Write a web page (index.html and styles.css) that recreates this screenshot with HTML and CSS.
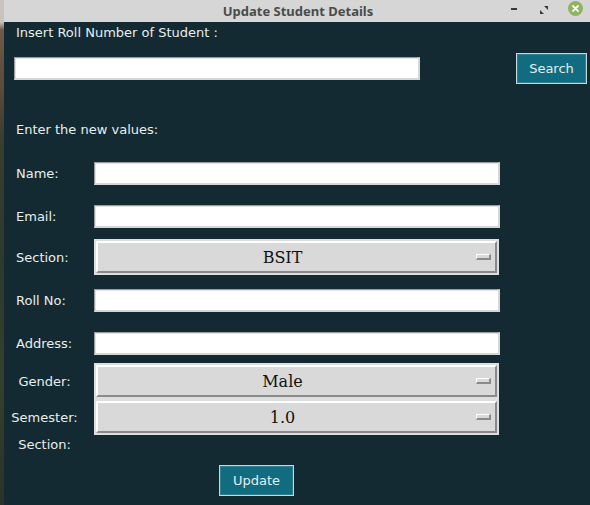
FILE: index.html
```html
<!DOCTYPE html>
<html>
<head>
<meta charset="utf-8">
<title>Update Student Details</title>
<link rel="stylesheet" href="styles.css">
</head>
<body>
<div class="desk"></div>
<div class="window">
  <div class="titlebar">
    <div class="title">Update Student Details</div>
    <div class="controls">
      <span class="ctl-min"></span>
      <svg class="ctl-max" width="8" height="8" viewBox="0 0 8 8"><path d="M4 0H8V4Z" fill="#3a3a3a"/><path d="M0 4V8H4Z" fill="#3a3a3a"/></svg>
      <svg class="ctl-close" width="15" height="15" viewBox="0 0 15 15"><circle cx="7.5" cy="7.5" r="7.5" fill="#8cb65a"/><path d="M5 5L10 10M10 5L5 10" stroke="#ffffff" stroke-width="1.8" stroke-linecap="round"/></svg>
    </div>
  </div>
  <div class="content">
    <div class="txt top-label">Insert Roll Number of Student :</div>
    <div class="search-row">
      <div class="entry wide"></div>
      <div class="btn search">Search</div>
    </div>
    <div class="txt heading">Enter the new values:</div>
    <div class="form">
      <div class="row r-entry"><div class="lbl txt">Name:</div><div class="entry"></div></div>
      <div class="row r-entry g20"><div class="lbl txt">Email:</div><div class="entry"></div></div>
      <div class="row r-opt g11"><div class="lbl txt">Section:</div><div class="opt"><span class="opt-text">BSIT</span><span class="ind"></span></div></div>
      <div class="row r-entry g14"><div class="lbl txt">Roll No:</div><div class="entry"></div></div>
      <div class="row r-entry g20"><div class="lbl txt">Address:</div><div class="entry"></div></div>
      <div class="row r-opt g8"><div class="lbl c txt">Gender:</div><div class="opt"><span class="opt-text">Male</span><span class="ind"></span></div></div>
      <div class="row r-opt"><div class="lbl c txt">Semester:</div><div class="opt"><span class="opt-text">1.0</span><span class="ind"></span></div></div>
      <div class="row r-last"><div class="lbl c txt">Section:</div></div>
    </div>
    <div class="btn update">Update</div>
  </div>
</div>
</body>
</html>
```
FILE: styles.css
```css
html, body {
  margin: 0;
  padding: 0;
}
body {
  width: 590px;
  height: 505px;
  overflow: hidden;
  display: flex;
  background: #132a32;
}
.desk {
  width: 4px;
  flex: none;
  background: linear-gradient(to bottom, #c9c3bd 0px, #c9c3bd 22px, #6e5a47 30px, #5a4a3a 90px, #3a3d30 140px, #2c3a2c 260px, #34402f 380px, #2a3327 505px);
}
.window {
  flex: 1;
  display: flex;
  flex-direction: column;
  background: #132a32;
}
.titlebar {
  height: 22px;
  flex: none;
  background: #d6d6d6;
  position: relative;
  display: flex;
  align-items: center;
  justify-content: center;
}
.title {
  font-family: "Noto Sans", "DejaVu Sans", sans-serif;
  font-weight: bold;
  font-size: 13px;
  color: #4b4b4b;
  margin-left: 2px;
}
.controls {
  position: absolute;
  right: 7px;
  top: 1px;
  height: 15px;
  display: flex;
  align-items: center;
}
.ctl-min {
  width: 6px;
  height: 2px;
  background: #3a3a3a;
  margin-right: 23px;
}
.ctl-max {
  margin-right: 20px;
  margin-top: 2px;
}
.content {
  flex: 1;
  display: flex;
  flex-direction: column;
}
.txt {
  font-family: "DejaVu Sans", sans-serif;
  font-size: 13px;
  line-height: 15px;
  color: #e9eded;
}
.top-label {
  margin: 3px 0 0 12px;
}
.search-row {
  margin-top: 13px;
  height: 31px;
  display: flex;
  align-items: center;
}
.entry {
  box-sizing: border-box;
  width: 406px;
  height: 23px;
  background: #ffffff;
  border-style: solid;
  border-width: 1px 2px 2px 1px;
  border-color: #9c9c9c #d6d6d6 #d6d6d6 #9c9c9c;
  box-shadow: inset 1px 1px 0 #e4e4e4;
}
.entry.wide {
  margin-left: 10px;
}
.btn {
  box-sizing: border-box;
  height: 31px;
  background: #126c7f;
  border: 1px solid #c9d6d9;
  box-shadow: inset 0 0 0 1px #2f7f8f;
  color: #e6eef0;
  font-family: "DejaVu Sans", sans-serif;
  font-size: 13px;
  display: flex;
  align-items: center;
  justify-content: center;
}
.search {
  width: 71px;
  margin-left: auto;
  margin-right: 3px;
}
.heading {
  margin: 38px 0 0 12px;
}
.form {
  margin-top: 25px;
  display: flex;
  flex-direction: column;
}
.row {
  display: flex;
  align-items: center;
}
.r-entry { height: 23px; }
.r-opt { height: 36px; }
.r-last { height: 18px; }
.g20 { margin-top: 20px; }
.g14 { margin-top: 14px; }
.g11 { margin-top: 11px; }
.g8 { margin-top: 8px; }
.lbl {
  box-sizing: border-box;
  width: 90px;
  flex: none;
  padding-left: 12px;
}
.lbl.c {
  padding: 0 15px 0 6px;
  text-align: center;
  white-space: nowrap;
}
.opt {
  box-sizing: border-box;
  width: 405px;
  height: 36px;
  border: 2px solid #dedede;
  background: #d9d9d9;
  display: flex;
  align-items: center;
  position: relative;
}
.opt::before {
  content: "";
  position: absolute;
  inset: 0;
  border-style: solid;
  border-width: 2px;
  border-color: #ffffff #8a8a8a #8a8a8a #ffffff;
  pointer-events: none;
}
.opt-text {
  flex: 1;
  text-align: center;
  font-family: "DejaVu Serif", serif;
  font-size: 16px;
  color: #111111;
  padding-right: 7px;
  padding-top: 1px;
}
.ind {
  box-sizing: border-box;
  width: 15px;
  height: 6px;
  flex: none;
  margin-right: 6px;
  background: #d9d9d9;
  border-style: solid;
  border-width: 1px 2px 2px 1px;
  border-color: #ffffff #8a8a8a #8a8a8a #ffffff;
}
.update {
  width: 75px;
  margin: 12px 0 0 215px;
}
```
